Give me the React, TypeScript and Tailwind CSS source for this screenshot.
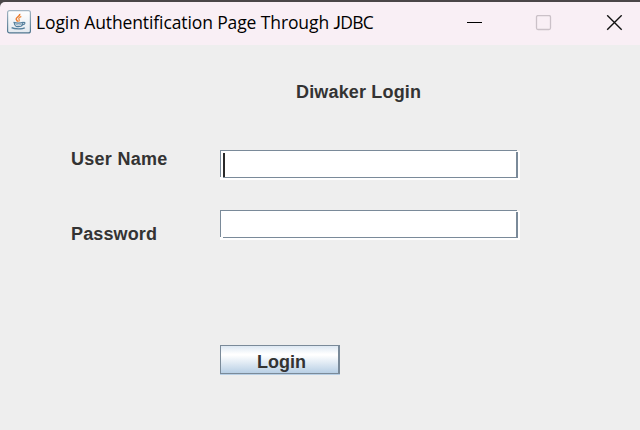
import React from "react";

function JavaIcon() {
  return (
    <svg width="24" height="24" viewBox="0 0 24 24" fill="none">
      <defs>
        <linearGradient id="tile" x1="0" y1="0" x2="0" y2="1">
          <stop offset="0" stopColor="#ffffff" />
          <stop offset="1" stopColor="#e3e9ef" />
        </linearGradient>
        <linearGradient id="edge" x1="0" y1="0" x2="0" y2="1">
          <stop offset="0" stopColor="#a3b5c3" />
          <stop offset="1" stopColor="#50768f" />
        </linearGradient>
      </defs>
      <rect x="0.6" y="0.6" width="22.8" height="22.3" rx="2" fill="url(#tile)" stroke="url(#edge)" strokeWidth="1.2" />
      <path d="M12.8 3.8C13.200 6.300 9.200 7 9.200 9c0 1.100 1 1.700 1.600 2.700" stroke="#ec7d31" strokeWidth="1.500" />
      <path d="M14.300 6.300C12.300 7.200 11.300 8 12 9.200c.7 1 .3 1.700-.4 2.500" stroke="#ef9148" strokeWidth="1.300" />
      <path d="M6.500 12.400c2.500.8 7.300.8 9.800 0M7.200 12.800c.2 2 1 3.200 1.800 3.500 1.400.4 3.700.4 5 0 .9-.3 1.500-1.500 1.900-3.100M16.200 12.500c2.500-.8 2.300 2-.8 2.500" stroke="#537f9d" strokeWidth="1.200" />
      <path d="M8.500 14.600c2 .5 4.200.5 6.200 0" stroke="#87a5b8" />
      <path d="M4.600 17.700c2.700 1.500 11.100 1.500 13.200 0" stroke="#537f9d" strokeWidth="1.400" />
    </svg>
  );
}

function Field({ focused = false }: { focused?: boolean }) {
  return (
    <div className="flex h-[30px] w-[300px] flex-col">
      <div className="h-px w-[297px] bg-[#7a8a99]" />
      <div className="flex h-[26px] bg-white">
        <div className="w-px bg-[#7a8a99]" />
        <div className="flex w-[295px] pl-[2px] pt-[2px]">
          {focused && <div className="h-6 w-[2px] bg-[#292929]" />}
        </div>
        <div className="mt-px w-[2px] bg-[#7a8a99]" />
      </div>
      <div className="h-px bg-white pl-[3px]">
        <div className="h-px w-[295px] bg-[#7a8a99]" />
      </div>
      <div className="h-[2px] bg-white" />
    </div>
  );
}

export default function App() {
  return (
    <div className="h-[430px] w-[640px] overflow-hidden bg-[#eeeeee] font-['Liberation_Sans',sans-serif] text-[18px] font-bold leading-[20px] text-[#333333]">
      <header className="h-[45px] bg-[#4a4648] pt-[2px]">
        <div className="flex h-[43px] rounded-tl-[5px] bg-[#f9eff5] pl-[7px] pt-[8px] text-black">
          <JavaIcon />
          <h1 className="ml-[5px] w-[338px] whitespace-nowrap font-['Open_Sans','Noto_Sans',sans-serif] text-[17.5px] font-normal leading-[24px] tracking-[-0.11px]">
            Login Authentification Page Through{" "}
            <span className="tracking-[-0.7px]">
              <span className="font-['Lato',sans-serif]">J</span>DBC
            </span>
          </h1>
          <svg className="ml-[93px] mt-[5px]" width="156" height="16" fill="none">
            <path d="M0 7.500h15" stroke="#000" />
            <rect x="69.500" y="0.500" width="14" height="14" rx="1.500" stroke="#cbc1c8" strokeWidth="1.300" />
            <path d="M140.200.3l14.500 14.500M154.700.3l-14.500 14.500" stroke="#111" strokeWidth="1.400" />
          </svg>
        </div>
      </header>
      <main>
        <h2 className="ml-[296px] pt-[37px] tracking-[0.16px]">Diwaker Login</h2>
        <form className="mt-[48px]">
          <div className="flex h-[60px]">
            <label className="-mt-px ml-[71px] w-[149px] tracking-[0.28px]">User Name</label>
            <Field focused />
          </div>
          <div className="flex">
            <label className="ml-[71px] w-[149px] pt-[14px] tracking-[0.14px]">Password</label>
            <Field />
          </div>
          <button type="button" className="ml-[220px] mt-[101px] block h-[30px] w-[120px] border-b border-[#b8cfe5]">
            <span className="block h-[29px] border border-r-2 border-[#7a8a99] bg-linear-[to_bottom,#dde8f3_0%,#ffffff_30%,#ffffff_34%,#b8cfe5_100%] pl-[4px] pt-[6px]">
              Login
            </span>
          </button>
        </form>
      </main>
    </div>
  );
}
